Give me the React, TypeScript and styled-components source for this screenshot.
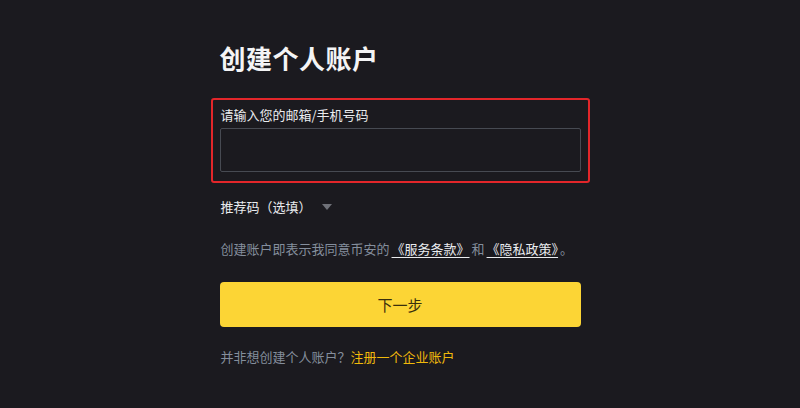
import styled, { createGlobalStyle } from "styled-components";

const GlobalStyle = createGlobalStyle`
    html, body {
        margin: 0;
        padding: 0;
        background: #1b1a1f;
    }
    body {
        font-family: "Noto Sans CJK SC", "Noto Sans", sans-serif;
        color: #eaecef;
    }
`;

const Page = styled.div`
    width: 800px;
    height: 408px;
    background: #1b1a1f;
    display: flex;
    justify-content: center;
    box-sizing: border-box;
    padding-top: 40px;
    overflow: hidden;
`;

const Form = styled.div`
    width: 361px;
    display: flex;
    flex-direction: column;
`;

const Title = styled.h1`
    margin: 0;
    font-size: 26px;
    line-height: 36px;
    font-weight: 700;
    letter-spacing: 0.5px;
    color: #f4f4f5;
`;

// red outline around the email field (annotation in the shot)
const Field = styled.div`
    margin: 22px -9px 0;
    padding: 7px 7px 9px;
    border: 2px solid #e3262a;
    border-radius: 3px;
    display: flex;
    flex-direction: column;
    gap: 5px;
`;

const Label = styled.label`
    font-size: 13px;
    line-height: 16px;
    color: #eaecef;
    padding-left: 1px;
`;

const Input = styled.input`
    height: 44px;
    box-sizing: border-box;
    background: #1b1a1f;
    border: 1px solid #474a52;
    border-radius: 2px;
    outline: none;
    color: #eaecef;
    font-size: 14px;
    padding: 0 12px;
`;

const Referral = styled.div`
    margin-top: 14px;
    display: flex;
    align-items: center;
    gap: 10px;
    font-size: 13px;
    line-height: 20px;
    color: #eaecef;
    padding-left: 1px;
`;

const Caret = styled.span`
    width: 0;
    height: 0;
    border-left: 5px solid transparent;
    border-right: 5px solid transparent;
    border-top: 6px solid #6f7178;
`;

const Terms = styled.p`
    margin: 22px 0 0;
    font-size: 13px;
    line-height: 20px;
    white-space: nowrap;
    color: #848e9c;
    padding-left: 1px;
`;

const TermsLink = styled.a`
    color: #eaecef;
    text-decoration: underline;
    text-underline-offset: 3px;
    margin: 0 2px;
`;

const NextButton = styled.button`
    margin-top: 23px;
    height: 45px;
    border: none;
    border-radius: 4px;
    background: #fcd535;
    color: #3a2f0c;
    font-family: inherit;
    font-size: 15px;
    cursor: pointer;
`;

const Footer = styled.p`
    margin: 20px 0 0;
    font-size: 13px;
    line-height: 20px;
    color: #848e9c;
    padding-left: 1px;
`;

const FooterLink = styled.a`
    color: #f0b90b;
    text-decoration: none;
`;

export default function App() {
    return (
        <>
            <GlobalStyle />
            <Page>
                <Form>
                    <Title>创建个人账户</Title>
                    <Field>
                        <Label>请输入您的邮箱/手机号码</Label>
                        <Input type="text" />
                    </Field>
                    <Referral>
                        推荐码（选填）
                        <Caret />
                    </Referral>
                    <Terms>
                        创建账户即表示我同意币安的<TermsLink>《服务条款》</TermsLink>和<TermsLink>《隐私政策》</TermsLink>。
                    </Terms>
                    <NextButton>下一步</NextButton>
                    <Footer>
                        并非想创建个人账户？<FooterLink>注册一个企业账户</FooterLink>
                    </Footer>
                </Form>
            </Page>
        </>
    );
}
